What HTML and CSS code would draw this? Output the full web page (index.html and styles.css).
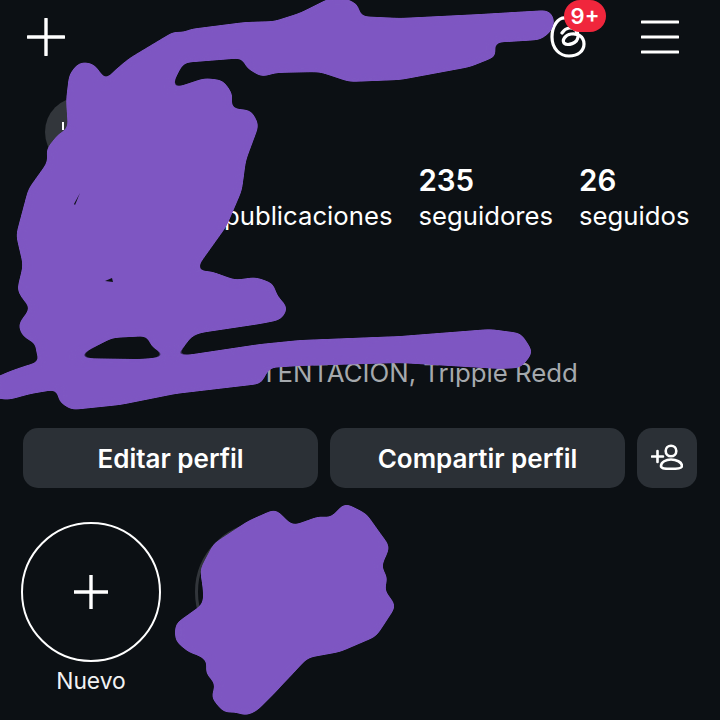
FILE: index.html
```html
<!DOCTYPE html>
<html lang="es">
<head>
<meta charset="UTF-8">
<meta name="viewport" content="width=device-width, initial-scale=1.0">
<title>Perfil</title>
<link rel="stylesheet" href="styles.css">
</head>
<body>
<div class="page">
    <header class="top-bar">
        <svg class="icon-new" width="38" height="38" viewBox="0 0 38 38">
            <path d="M19 1V37M1 19H37" stroke="#fff" stroke-width="3.4" stroke-linecap="round" fill="none"/>
        </svg>
        <div class="top-actions">
            <div class="threads">
                <svg width="36" height="42" viewBox="0 0 36 42">
                    <path d="M16 2C8 1 2 10 2 21C2 33 10 40 19 40C28 40 34 35 34 28C34 20 27 17 21 18C15 19 12 24 14 27C17 30 28 28 28 20C28 15 24 11 19 12C16 12.5 14 14 12 17" stroke="#fff" stroke-width="3.2" stroke-linecap="round" fill="none"/>
                </svg>
                <span class="badge">9+</span>
            </div>
            <svg class="icon-menu" width="38" height="36" viewBox="0 0 38 36">
                <path d="M1 3H37M1 18H37M1 33H37" stroke="#fff" stroke-width="3.2" stroke-linecap="round" fill="none"/>
            </svg>
        </div>
    </header>

    <section class="profile">
        <div class="note"><span class="note-mark"></span></div>
        <div class="stats">
            <div class="stat">
                <b>&nbsp;</b>
                <span>publicaciones</span>
            </div>
            <div class="stat">
                <b>235</b>
                <span>seguidores</span>
            </div>
            <div class="stat">
                <b>26</b>
                <span>seguidos</span>
            </div>
        </div>
    </section>

    <p class="bio">XXXTENTACION, Trippie Redd</p>

    <div class="buttons">
        <button class="btn">Editar perfil</button>
        <button class="btn">Compartir perfil</button>
        <button class="btn btn-icon">
            <svg width="32" height="28" viewBox="0 0 32 28">
                <path d="M1 12.5H12M6.5 7V18" stroke="#fff" stroke-width="2.6" stroke-linecap="round" fill="none"/>
                <circle cx="20" cy="7" r="5.3" stroke="#fff" stroke-width="2.6" fill="none"/>
                <path d="M10 22C10 18 15 15.5 20 15.5C25 15.5 31 18 31 22C31 24 28 24.8 20 24.8C12 24.8 10 24 10 22Z" stroke="#fff" stroke-width="2.6" fill="none"/>
            </svg>
        </button>
    </div>

    <div class="stories">
        <div class="story">
            <div class="story-ring story-new">
                <svg width="36" height="36" viewBox="0 0 36 36">
                    <path d="M18 1V35M1 18H35" stroke="#fff" stroke-width="3.4" fill="none"/>
                </svg>
            </div>
            <span class="story-name">Nuevo</span>
        </div>
        <div class="story">
            <div class="story-ring story-old"></div>
        </div>
    </div>

    <!-- tachado encima del perfil -->
    <svg class="scribble" width="720" height="720" viewBox="0 0 720 720">
        <defs>
            <!-- blur + threshold rounds the corners like a marker stroke -->
            <filter id="marker" x="-5%" y="-5%" width="110%" height="110%">
                <feGaussianBlur stdDeviation="4"/>
                <feComponentTransfer>
                    <feFuncA type="linear" slope="14" intercept="-6.5"/>
                </feComponentTransfer>
            </filter>
        </defs>
        <g filter="url(#marker)">
            <path class="ink" d="M553 20L548 12L480 16L400 20L358 18L357 6L345 0L330 0L300 15L275 23L245 24L190 31L183 35L175 33L160 42L130 60L118 70L100 88L101 76L92 65L80 64L71 75L68 100L70 130L60 135L48 150L50 162L30 190L18 235L25 265L19 290L28 303L35 305L20 325L24 335L40 344L37 352L45 362L25 368L8 374L-6 380L-6 396L8 398L30 392L60 387L60 400L72 408L120 403L175 392L260 382L268 366L300 364L400 361L500 367L520 366L531 352L520 335L490 331L400 338L300 342L260 346L180 358L140 361L65 360L112 336L150 334L152 345L165 352L180 349L190 335L200 331L260 322L280 318L286 308L275 296L272 285L255 279L235 282L210 273L192 273L200 260L225 225L240 190L244 160L257 125L250 112L228 110L231 95L222 82L205 80L166 93L182 61L245 56L247 66L262 75L275 71L320 70L350 80L400 78L470 65L495 55L490 41L540 38L550 30Z"/>
            <path class="ink" d="M202 570L215 545L250 522L275 511L292 528L320 518L331 520L345 505L365 515L377 532L388 547L379 567L386 578L382 590L394 606L375 635L340 650L307 656L275 690L255 710L245 714L236 710L225 711L213 697L218 684L207 672L210 660L198 653L190 651L177 640L177 625L205 605L205 590Z"/>
        </g>
        <path class="gap" d="M74 204L80 193L75 205Z"/>
        <path class="gap" d="M105 281L112 278L113 282Z"/>
    </svg>
</div>
</body>
</html>
```

FILE: styles.css
```css
body {
    margin: 0;
    background-color: #0c1014;
    font-family: Inter, "Liberation Sans", sans-serif;
    color: #fff;
}

.page {
    position: relative;
    width: 720px;
    height: 720px;
    overflow: hidden;
}

.top-bar {
    display: flex;
    justify-content: space-between;
    align-items: center;
    height: 74px;
    padding: 0 41px 0 27px;
}

.top-actions {
    display: flex;
    align-items: center;
    gap: 55px;
}

.threads {
    position: relative;
    height: 42px;
}

.badge {
    position: absolute;
    top: -16px;
    left: 14px;
    width: 42px;
    height: 32px;
    border-radius: 16px;
    background-color: #f0263c;
    font-size: 22px;
    font-weight: 600;
    line-height: 32px;
    text-align: center;
}

.profile {
    position: relative;
    height: 158px;
}

.note {
    position: absolute;
    left: 45px;
    top: 23px;
    width: 180px;
    height: 70px;
    border-radius: 36px;
    background-color: #32363b;
}

.note-mark {
    display: block;
    width: 2px;
    height: 8px;
    margin: 25px 0 0 17px;
    background-color: #fff;
}

.stats {
    display: flex;
    gap: 26px;
    padding: 88px 0 0 224px;
}

.stat b {
    display: block;
    font-size: 29.5px;
    font-weight: 600;
    line-height: 36px;
}

.stat span {
    display: block;
    font-size: 25.7px;
    line-height: 36px;
}

.bio {
    margin: 124px 0 0;
    padding-left: 209px;
    font-size: 25.8px;
    line-height: 34px;
    color: #a5a9ad;
}

.buttons {
    display: flex;
    gap: 12px;
    position: absolute;
    top: 428px;
    left: 23px;
}

.btn {
    width: 295px;
    height: 60px;
    padding: 0;
    border: 0;
    border-radius: 15px;
    background-color: #2b3036;
    color: #fff;
    font-family: inherit;
    font-size: 26px;
    font-weight: 600;
}

.btn-icon {
    display: flex;
    justify-content: center;
    align-items: center;
    width: 60px;
}

.stories {
    display: flex;
    gap: 34px;
    position: absolute;
    top: 522px;
    left: 21px;
}

.story {
    display: flex;
    flex-direction: column;
    align-items: center;
}

.story-ring {
    display: flex;
    justify-content: center;
    align-items: center;
    box-sizing: border-box;
    width: 140px;
    height: 140px;
    border-radius: 50%;
}

.story-new {
    border: 2px solid #fff;
}

.story-old {
    border: 3px solid #32363b;
}

.story-name {
    margin-top: 4px;
    font-size: 22.8px;
    line-height: 30px;
    color: #f1f2f3;
}

.scribble {
    position: absolute;
    top: 0;
    left: 0;
}

.ink {
    fill: #7e57c2;
    stroke: #7e57c2;
    stroke-width: 4;
    stroke-linejoin: round;
}

.gap {
    fill: #0c1014;
}
```
